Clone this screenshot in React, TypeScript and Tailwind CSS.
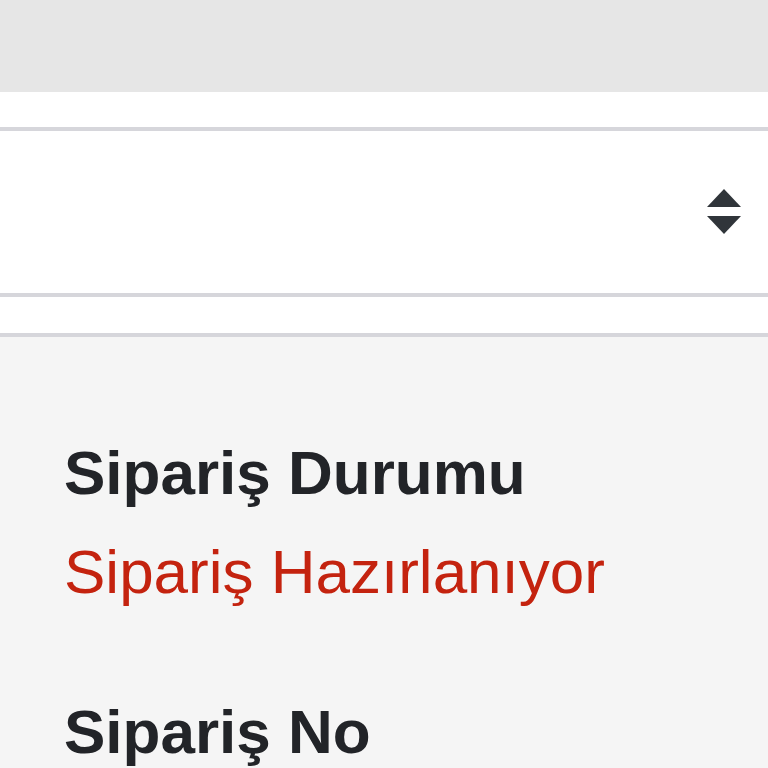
const details = [
  { label: "Sipariş Durumu", value: "Sipariş Hazırlanıyor" },
  { label: "Sipariş No", value: "" },
];

function SortIcon() {
  return (
    <svg width="34" height="46" viewBox="0 0 34 46" className="text-[#30353a]">
      <polygon points="17,0 34,18 0,18" fill="currentColor" />
      <polygon points="0,27 34,27 17,45" fill="currentColor" />
    </svg>
  );
}

export default function App() {
  return (
    <div className="h-[768px] overflow-hidden bg-[#f5f5f5] font-['Liberation_Sans',Arial,sans-serif]">
      <header className="h-[92px] bg-[#e6e6e6]" />

      <div className="bg-white">
        <div className="h-[35px]" />
        <div className="border-y-4 border-[#d6d6db] h-[170px] flex items-center justify-end pr-[27px]">
          <SortIcon />
        </div>
        <div className="h-[40px] border-b-4 border-[#d6d6db]" />
      </div>

      <section className="pt-[86px] px-16">
        {details.map((item) => (
          <div key={item.label} className="mb-[61px]">
            <h3 className="text-[62px] leading-[99px] font-bold text-[#222428]">{item.label}</h3>
            {item.value && (
              <p className="text-[62px] leading-[99px] text-[#c4230f]">{item.value}</p>
            )}
          </div>
        ))}
      </section>
    </div>
  );
}
